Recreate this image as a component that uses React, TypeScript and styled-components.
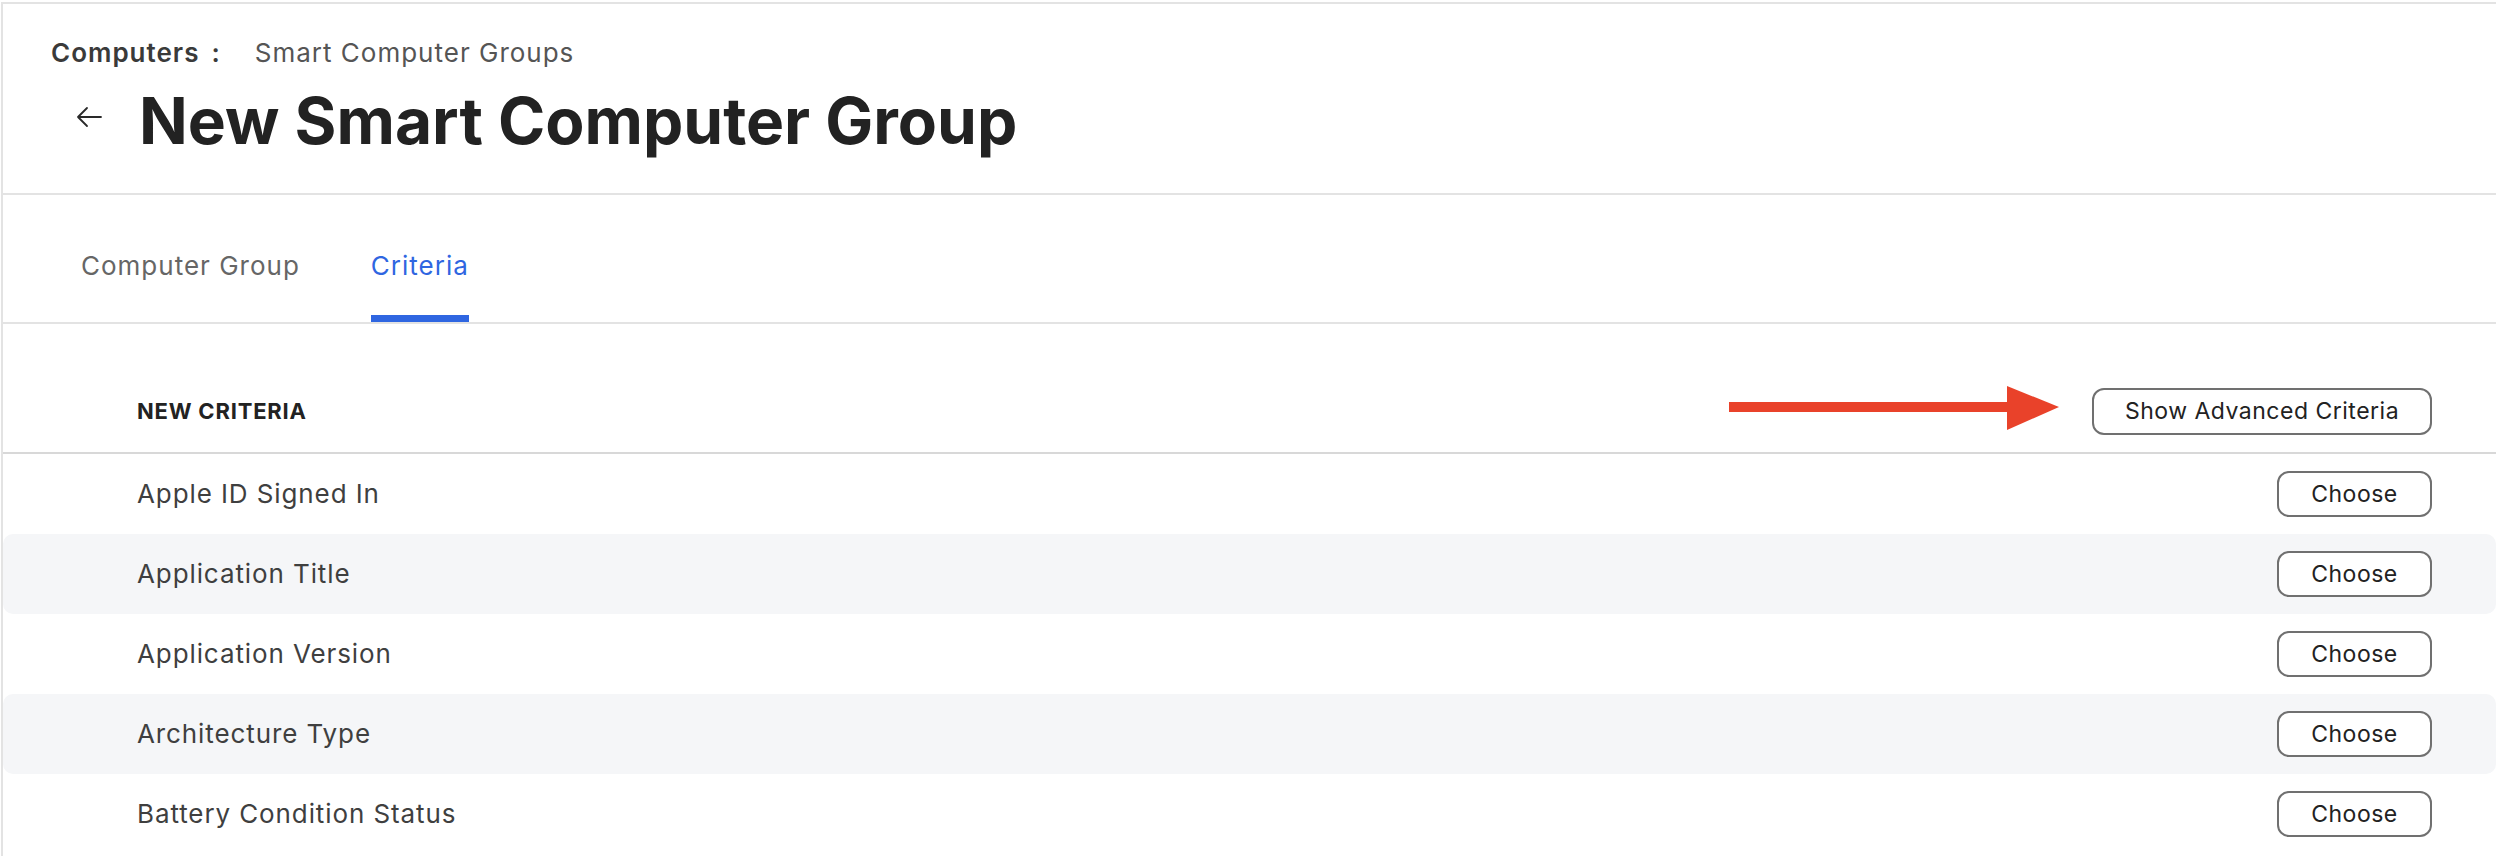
import React from 'react';
import styled, { createGlobalStyle } from 'styled-components';

const GlobalStyle = createGlobalStyle`
  html, body {
    margin: 0;
    padding: 0;
    background: #ffffff;
    font-family: Inter, "Noto Sans", "Liberation Sans", sans-serif;
    color: #222222;
  }
  * {
    box-sizing: border-box;
  }
`;

const StyledPage = styled.div`
  padding: 2px 0 0 1px;
  min-height: 856px;
`;

const StyledFrame = styled.main`
  border-top: 2px solid #e3e3e3;
  border-left: 2px solid #e3e3e3;
  min-height: 854px;
`;

const StyledHeader = styled.header`
  padding: 33px 48px 33px;
  border-bottom: 2px solid #e3e3e3;
`;

const StyledBreadcrumb = styled.nav`
  display: flex;
  align-items: baseline;
  font-size: 26px;
  line-height: 32px;
  letter-spacing: 1px;
  color: #555555;
`;

const StyledCrumbParent = styled.span`
  font-weight: 600;
  color: #3a3a3a;
`;

const StyledCrumbSeparator = styled.span`
  font-weight: 600;
  color: #3a3a3a;
  margin: 0 34px 0 12px;
`;

const StyledTitleRow = styled.div`
  display: flex;
  align-items: center;
  margin-top: 13px;
`;

const StyledBackButton = styled.button`
  display: flex;
  align-items: center;
  justify-content: center;
  padding: 0;
  margin: 0 36px 8px 24px;
  border: none;
  background: none;
  color: #2a2a2a;
  cursor: pointer;
`;

const StyledTitle = styled.h1`
  margin: 0;
  font-size: 64px;
  line-height: 78px;
  font-weight: 700;
  color: #222222;
`;

const StyledTabBar = styled.div`
  display: flex;
  align-items: flex-end;
  gap: 71px;
  height: 129px;
  padding-left: 78px;
  border-bottom: 2px solid #e3e3e3;
`;

const StyledTab = styled.button<{ $active?: boolean }>`
  padding: 0 0 33px;
  border: none;
  border-bottom: 7px solid ${({ $active }) => ($active ? '#2f66e1' : 'transparent')};
  background: none;
  font-family: inherit;
  font-size: 26px;
  line-height: 32px;
  letter-spacing: 1px;
  color: ${({ $active }) => ($active ? '#2f66e1' : '#666666')};
  cursor: pointer;
`;

const StyledCriteriaHeader = styled.div`
  display: flex;
  align-items: center;
  padding: 62px 64px 16px 134px;
  border-bottom: 2px solid #d8d8d8;
`;

const StyledSectionLabel = styled.h2`
  flex: 1;
  margin: 0;
  font-size: 22px;
  line-height: 28px;
  font-weight: 700;
  letter-spacing: 0.8px;
  color: #222222;
  text-transform: uppercase;
`;

const StyledPointer = styled.svg`
  display: block;
  margin-right: 33px;
`;

const StyledOutlineButton = styled.button<{ $wide?: boolean }>`
  height: ${({ $wide }) => ($wide ? '47px' : '46px')};
  width: ${({ $wide }) => ($wide ? '340px' : '155px')};
  padding: 0;
  border: 2px solid #707070;
  border-radius: 12px;
  background: #ffffff;
  font-family: inherit;
  font-size: 23px;
  line-height: 28px;
  letter-spacing: 0.5px;
  color: #222222;
  cursor: pointer;
`;

const StyledList = styled.ul`
  margin: 0;
  padding: 0;
  list-style: none;
`;

const StyledRow = styled.li<{ $striped?: boolean }>`
  display: flex;
  align-items: center;
  justify-content: space-between;
  height: 80px;
  padding: 0 64px 0 134px;
  border-radius: 10px;
  background: ${({ $striped }) => ($striped ? '#f5f6f8' : '#ffffff')};
`;

const StyledRowLabel = styled.span`
  font-size: 26px;
  line-height: 32px;
  letter-spacing: 0.9px;
  color: #3f3f3f;
`;

const criteria = [
  'Apple ID Signed In',
  'Application Title',
  'Application Version',
  'Architecture Type',
  'Battery Condition Status',
];

const BackArrow = () => (
  <svg width="28" height="24" viewBox="0 0 28 24" fill="none">
    <path
      d="M26 12H3M12 3L3 12L12 21"
      stroke="currentColor"
      strokeWidth="1.8"
      strokeLinecap="round"
      strokeLinejoin="round"
    />
  </svg>
);

const App = () => {
  return (
    <>
      <GlobalStyle />
      <StyledPage>
        <StyledFrame>
          <StyledHeader>
            <StyledBreadcrumb>
              <StyledCrumbParent>Computers</StyledCrumbParent>
              <StyledCrumbSeparator>:</StyledCrumbSeparator>
              <span>Smart Computer Groups</span>
            </StyledBreadcrumb>
            <StyledTitleRow>
              <StyledBackButton aria-label="Back">
                <BackArrow />
              </StyledBackButton>
              <StyledTitle>New Smart Computer Group</StyledTitle>
            </StyledTitleRow>
          </StyledHeader>

          <StyledTabBar>
            <StyledTab>Computer Group</StyledTab>
            <StyledTab $active>Criteria</StyledTab>
          </StyledTabBar>

          <StyledCriteriaHeader>
            <StyledSectionLabel>New Criteria</StyledSectionLabel>
            <StyledPointer width="330" height="50" viewBox="0 0 330 50">
              <rect x="0" y="16" width="280" height="10" fill="#e9422a" />
              <polygon points="278,0 330,21 278,44" fill="#e9422a" />
            </StyledPointer>
            <StyledOutlineButton $wide>Show Advanced Criteria</StyledOutlineButton>
          </StyledCriteriaHeader>

          <StyledList>
            {criteria.map((name, i) => (
              <StyledRow key={name} $striped={i % 2 === 1}>
                <StyledRowLabel>{name}</StyledRowLabel>
                <StyledOutlineButton>Choose</StyledOutlineButton>
              </StyledRow>
            ))}
          </StyledList>
        </StyledFrame>
      </StyledPage>
    </>
  );
};

export default App;
